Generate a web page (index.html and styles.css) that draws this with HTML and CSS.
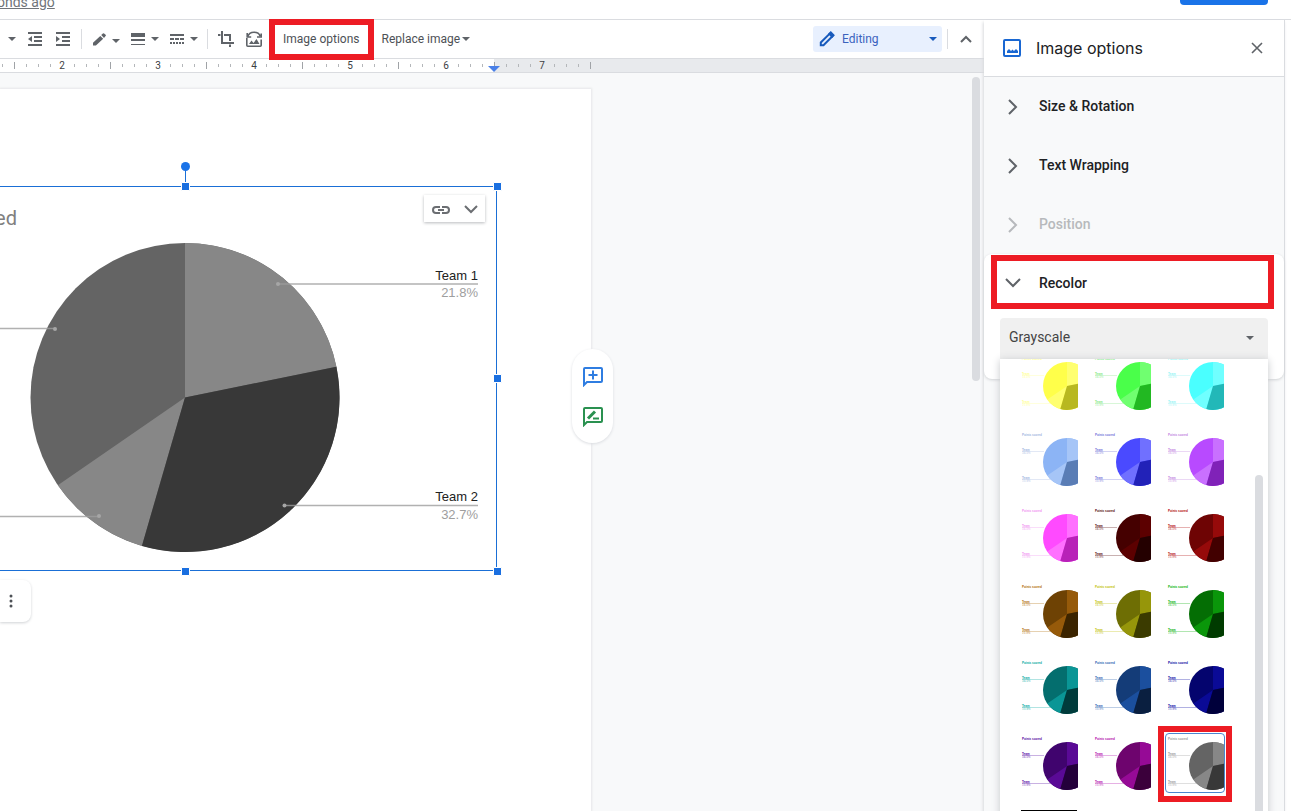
FILE: index.html
```html
<!DOCTYPE html>
<html lang="en">
<head>
<meta charset="utf-8">
<title>Image options</title>
<link rel="stylesheet" href="styles.css">
</head>
<body>
<svg class="defs" aria-hidden="true">
  <symbol id="caret" viewBox="0 0 8 4"><path d="M0 0h8L4 4z" fill="currentColor"/></symbol>
  <symbol id="chev" viewBox="0 0 12 18"><path d="M2 2l7 7-7 7" fill="none" stroke="currentColor" stroke-width="2"/></symbol>
  <symbol id="thumb" viewBox="0 0 58 58">
    <g class="thumb-text">
      <text x="2" y="5.5">Points scored</text>
      <text x="2" y="21">Team</text><text x="2" y="24" opacity=".5">34.5%</text>
      <text x="2" y="49">Team</text><text x="2" y="52" opacity=".5">10.9%</text>
    </g>
    <path class="thumb-line" d="M2 21.5h22M2 49.5h28"/>
    <circle class="thumb-main" cx="47" cy="32" r="24"/>
    <path class="thumb-light" d="M47 32V8A24 24 0 0 1 70.5 27.2zM47 32L40.3 55A24 24 0 0 1 27.3 45.6z"/>
    <path class="thumb-dark" d="M47 32L70.5 27.2A24 24 0 0 1 40.3 55z"/>
  </symbol>
</svg>

<header class="topbar">
  <a class="last-edit" href="#">onds ago</a>
  <button class="share" aria-label="Share"></button>
</header>

<div class="workspace">
  <main class="editor">
    <div class="toolbar">
      <button class="tool t-caret" aria-label="Align options"><svg class="caret"><use href="#caret"/></svg></button>
      <button class="tool t-outdent" aria-label="Decrease indent"><svg width="14" height="14" viewBox="0 0 14 14" fill="#5f6368"><path d="M0 0h14v2H0zM6 4h8v2H6zM6 8h8v2H6zM0 12h14v2H0zM4 4v6L0 7z"/></svg></button>
      <button class="tool t-indent" aria-label="Increase indent"><svg width="14" height="14" viewBox="0 0 14 14" fill="#5f6368"><path d="M0 0h14v2H0zM6 4h8v2H6zM6 8h8v2H6zM0 12h14v2H0zM0 4v6l4-3z"/></svg></button>
      <span class="divider"></span>
      <button class="tool t-pen" aria-label="Border color"><svg width="13" height="13" viewBox="0 0 13 13" fill="#5f6368"><path d="M0 12.500V9.700L7.300 2.900l2.900 2.800L2.900 12.500zM8.200 2.100L9.900.4q.6-.5 1.200 0L12.600 1.800q.6.600 0 1.200L11 4.900z"/></svg><svg class="caret low"><use href="#caret"/></svg></button>
      <button class="tool t-weight" aria-label="Border weight"><svg width="14" height="12" viewBox="0 0 14 12" fill="#5f6368"><path d="M0 0h14v4H0zM0 6h14v2H0zM0 11h14v1H0z"/></svg><svg class="caret"><use href="#caret"/></svg></button>
      <button class="tool t-dash" aria-label="Border dash"><svg width="14" height="12" viewBox="0 0 14 12" fill="#5f6368"><path d="M0 1h14v2H0zM0 5h4v2H0zM5 5h4v2H5zM10 5h4v2h-4zM0 9h2v2H0zM3 9h2v2H3zM6 9h2v2H6zM9 9h2v2H9zM12 9h2v2h-2z"/></svg><svg class="caret"><use href="#caret"/></svg></button>
      <span class="divider"></span>
      <button class="tool t-crop" aria-label="Crop image"><svg width="16" height="16" viewBox="0 0 16 16" fill="none" stroke="#5f6368" stroke-width="2"><path d="M0 4h2.500M4 0v12h12M6 4h6v6M12 13.500V16"/></svg></button>
      <button class="tool t-reset" aria-label="Reset image"><svg width="16" height="16" viewBox="0 0 16 16" fill="none" stroke="#5f6368" stroke-width="1.600"><path d="M.8 7v7.200q0 1 1 1h12.400q1 0 1-1V8.500M1.500 6Q3 1.200 8 1.200T14 5M1.200 2v4h4M15.200 2.500v3.500H11"/><path d="M3 13l2.500-3.500L7.500 12l3-4 3 5z" fill="#5f6368" stroke="none"/></svg></button>
      <button class="tool text-tool marked">Image options</button>
      <button class="tool text-tool">Replace image<svg class="caret"><use href="#caret"/></svg></button>
      <div class="mode-area">
        <button class="mode"><svg width="16" height="16" viewBox="0 0 16 16" fill="none" stroke="#185abc" stroke-width="2"><path d="M1.800 14.200v-2.700l8.700-8.700 2.700 2.700-8.700 8.700z"/><path d="M10.500 2.800l1.300-1.300 2.700 2.700-1.300 1.300z" fill="#185abc"/></svg><span>Editing</span><svg class="caret"><use href="#caret"/></svg></button>
        <span class="divider"></span>
        <button class="tool collapse" aria-label="Hide menus"><svg width="12" height="8" viewBox="0 0 12 8"><path d="M1 7l5-5 5 5" fill="none" stroke="#5f6368" stroke-width="2"/></svg></button>
      </div>
    </div>

    <div class="ruler">
      <svg class="ruler-scale" width="600" height="13">
        <defs><pattern id="ticks" x="-34" y="0" width="96" height="13" patternUnits="userSpaceOnUse">
          <path d="M12 5h1v3h-1zM24 5h1v3h-1zM36 5h1v3h-1zM60 5h1v3h-1zM72 5h1v3h-1zM84 5h1v3h-1z" fill="#b4b7ba"/><path d="M48 3h1v7h-1z" fill="#a0a3a7"/>
        </pattern></defs>
        <rect width="494" height="13" fill="#fff"/>
        <rect width="592" height="13" fill="url(#ticks)"/>
        <g class="ruler-num">
          <text x="62" y="10">2</text><text x="158" y="10">3</text><text x="254" y="10">4</text><text x="350" y="10">5</text><text x="446" y="10">6</text><text x="542" y="10">7</text>
        </g>
        <path d="M488 7h12l-6 6z" fill="#4a80e8"/>
      </svg>
    </div>

    <div class="canvas">
      <article class="page">
        <figure class="chart">
          <svg width="504" height="422" viewBox="0 158 504 422">
            <circle cx="185" cy="397.500" r="154.500" fill="#646464"/>
            <path d="M185 397.500V243A154.500 154.500 0 0 1 336.400 366.700zM185 397.500L141.900 545.900A154.500 154.500 0 0 1 57.800 485.200z" fill="#878787"/>
            <path d="M185 397.500L336.400 366.700A154.500 154.500 0 0 1 141.900 545.900z" fill="#383838"/>
            <path d="M278 284H478M284 505.500H478M0 328.500H55M0 516.500H99" fill="none" stroke="#9e9e9e" stroke-opacity=".8" stroke-width="1.500"/>
            <g fill="#a6a6a6"><circle cx="278" cy="284" r="2"/><circle cx="284.500" cy="505.500" r="2"/><circle cx="55" cy="329" r="2"/><circle cx="99" cy="516" r="2"/></g>
            <text class="chart-title" x="17" y="225">ed</text>
            <g class="chart-label"><text x="478" y="280">Team 1</text><text x="478" y="501">Team 2</text></g>
            <g class="chart-value"><text x="478" y="297">21.8%</text><text x="478" y="519">32.7%</text></g>
            <path d="M0 186.500H496.500V570.500H0M185.500 170V186" fill="none" stroke="#1a6fd6"/>
            <circle cx="185.500" cy="166.500" r="4.500" fill="#1a73e8"/>
            <g fill="#1a6fe0" stroke="#fff"><path d="M181.500 182.500h8v8h-8zM493.500 182.500h8v8h-8zM493.500 374.500h8v8h-8zM493.500 567.500h8v8h-8zM181.500 567.500h8v8h-8z"/></g>
          </svg>
          <button class="link-badge" aria-label="Linked chart options">
            <svg width="18" height="8" viewBox="0 0 18 8" fill="none" stroke="#6b6e72" stroke-width="2"><path d="M8 1H4a3 3 0 0 0 0 6h4M10 1h4a3 3 0 0 1 0 6h-4M6 4h6"/></svg>
            <svg width="14" height="9" viewBox="0 0 14 9" fill="none" stroke="#6b6e72" stroke-width="2"><path d="M1 1l6 6 6-6"/></svg>
          </button>
        </figure>
        <button class="more" aria-label="More options"><svg width="4" height="14" viewBox="0 0 4 14" fill="#4d5156"><circle cx="2" cy="2" r="1.500"/><circle cx="2" cy="7" r="1.500"/><circle cx="2" cy="12" r="1.500"/></svg></button>
      </article>
      <div class="float-actions">
        <button aria-label="Add comment"><svg width="20" height="20" viewBox="0 0 20 20" fill="none" stroke="#2f7de1" stroke-width="2"><path d="M1 18V2q0-1 1-1h16q1 0 1 1v12q0 1-1 1H4zM10 3.500v9M5.500 8h9"/></svg></button>
        <button aria-label="Suggest edits"><svg width="20" height="20" viewBox="0 0 20 20" fill="none" stroke="#2a9150" stroke-width="2"><path d="M1 18V2q0-1 1-1h16q1 0 1 1v12q0 1-1 1H4z"/><path d="M5 11.500L12 4.500" stroke-width="3"/><path d="M10 11.500h6"/></svg></button>
      </div>
      <div class="canvas-scroll"></div>
    </div>
  </main>

  <aside class="sidebar">
    <div class="side-head">
      <svg width="18" height="18" viewBox="0 0 18 18"><rect x="1" y="1" width="16" height="16" rx="1" fill="none" stroke="#1967d2" stroke-width="2"/><path d="M4 14v-2l2-2 2 2 1.500-1.500L11 12l2-2 2 2v2z" fill="#1967d2"/></svg>
      <h1>Image options</h1>
      <button class="close" aria-label="Close"><svg width="12" height="12" viewBox="0 0 12 12"><path d="M1 1l10 10M11 1L1 11" stroke="#5f6368" stroke-width="1.600"/></svg></button>
    </div>
    <button class="section"><svg class="chev"><use href="#chev"/></svg><span>Size &amp; Rotation</span></button>
    <button class="section"><svg class="chev"><use href="#chev"/></svg><span>Text Wrapping</span></button>
    <button class="section" disabled><svg class="chev"><use href="#chev"/></svg><span>Position</span></button>
    <div class="open-card">
      <button class="section recolor"><svg class="chev down" viewBox="0 0 18 12"><path d="M2 2l7 7 7-7" fill="none" stroke="currentColor" stroke-width="2"/></svg>Recolor</button>
      <div class="picker">
        <select aria-label="Recolor"><option>Grayscale</option></select>
        <svg class="caret"><use href="#caret"/></svg>
        <div class="palette">
          <div class="swatches">
            <button class="sw yellow" aria-label="Yellow"><svg><use href="#thumb"/></svg></button>
            <button class="sw green" aria-label="Green"><svg><use href="#thumb"/></svg></button>
            <button class="sw cyan" aria-label="Cyan"><svg><use href="#thumb"/></svg></button>
            <button class="sw cornflower" aria-label="Cornflower"><svg><use href="#thumb"/></svg></button>
            <button class="sw blue" aria-label="Blue"><svg><use href="#thumb"/></svg></button>
            <button class="sw purple" aria-label="Purple"><svg><use href="#thumb"/></svg></button>
            <button class="sw magenta" aria-label="Magenta"><svg><use href="#thumb"/></svg></button>
            <button class="sw d-berry" aria-label="Dark berry"><svg><use href="#thumb"/></svg></button>
            <button class="sw d-red" aria-label="Dark red"><svg><use href="#thumb"/></svg></button>
            <button class="sw d-orange" aria-label="Dark orange"><svg><use href="#thumb"/></svg></button>
            <button class="sw d-yellow" aria-label="Dark yellow"><svg><use href="#thumb"/></svg></button>
            <button class="sw d-green" aria-label="Dark green"><svg><use href="#thumb"/></svg></button>
            <button class="sw d-cyan" aria-label="Dark cyan"><svg><use href="#thumb"/></svg></button>
            <button class="sw d-cornflower" aria-label="Dark cornflower"><svg><use href="#thumb"/></svg></button>
            <button class="sw d-blue" aria-label="Dark blue"><svg><use href="#thumb"/></svg></button>
            <button class="sw d-purple" aria-label="Dark purple"><svg><use href="#thumb"/></svg></button>
            <button class="sw d-magenta" aria-label="Dark magenta"><svg><use href="#thumb"/></svg></button>
            <button class="sw gray selected" aria-label="Grayscale"><svg><use href="#thumb"/></svg></button>
            <button class="sw" aria-label="Negative"><svg viewBox="0 0 58 58"><rect x="1" width="56" height="58" fill="#000"/></svg></button>
          </div>
          <div class="palette-scroll"></div>
        </div>
      </div>
    </div>
  </aside>
</div>
</body>
</html>
```

FILE: styles.css
```css
* { box-sizing: border-box; }
body {
  margin: 0;
  height: 100vh;
  overflow: hidden;
  display: flex;
  flex-direction: column;
  font-family: Roboto, "Liberation Sans", sans-serif;
  font-size: 14px;
  color: #202124;
  background: #fff;
}
button {
  font: inherit;
  color: inherit;
  border: 0;
  background: none;
  padding: 0;
}
svg { display: block; flex: none; }
.defs { display: none; }
.caret { width: 8px; height: 4px; color: #5f6368; }

/* Top strip */
.topbar {
  display: flex;
  justify-content: space-between;
  height: 20px;
  flex: none;
  padding-right: 23px;
  border-bottom: 1px solid #dadce0;
}
.last-edit {
  color: #70757a;
  line-height: 20px;
  margin: -8px 0 0 -3px;
}
.share {
  width: 88px;
  height: 5px;
  border-radius: 0 0 4px 4px;
  background: #1a73e8;
}

.workspace {
  flex: 1;
  min-height: 0;
  display: flex;
  padding-right: 6px;
}
.editor {
  flex: 1;
  min-width: 0;
  display: flex;
  flex-direction: column;
}

/* Toolbar */
.toolbar {
  display: flex;
  align-items: center;
  height: 39px;
  flex: none;
  padding-left: 8px;
  border-bottom: 1px solid #dadce0;
}
.tool { display: flex; align-items: center; flex: none; }
.divider { width: 1px; height: 20px; background: #dadce0; flex: none; }
.t-outdent { margin-left: 12px; }
.t-indent { margin: 0 11px 0 14px; }
.t-pen { margin: 0 11px; gap: 6px; }
.low { margin-top: 4px; }
.t-weight, .t-dash { gap: 6px; }
.t-dash { margin: 0 9px 0 11px; }
.t-crop { margin-left: 10px; }
.t-reset { margin-left: 12px; }
.text-tool { color: #4d5156; font-size: 12px; line-height: 16px; gap: 2px; }
.marked {
  border: 6px solid #ed1c24;
  height: 41px;
  padding: 0 9px 0 8px;
  margin: 0 7px;
  position: relative;
  z-index: 2;
}
.mode-area {
  margin-left: auto;
  display: flex;
  align-items: center;
  padding-right: 12px;
}
.mode {
  display: flex;
  align-items: center;
  width: 129px;
  height: 26px;
  padding: 0 5px 0 6px;
  gap: 7px;
  margin-right: 5px;
  border-radius: 3px;
  background: #e8f0fe;
  color: #3a62bd;
  font-size: 12px;
}
.mode .caret { margin-left: auto; color: #185abc; }
.collapse { margin-left: 12px; }

/* Ruler */
.ruler {
  height: 14px;
  flex: none;
  background: #e8eaed;
  border-bottom: 1px solid #dadce0;
  overflow: hidden;
}
.ruler-num { font-size: 10px; fill: #3c4043; text-anchor: middle; }

/* Document */
.canvas {
  flex: 1;
  min-height: 0;
  position: relative;
  background: #f8f9fa;
  padding-top: 16px;
  display: flex;
}
.page {
  width: 591px;
  background: #fff;
  box-shadow: 0 0 2px 1px #e6e7e9;
}
.chart { margin: 0; padding-top: 69px; position: relative; }
.chart-title { font-size: 20px; fill: #808080; text-anchor: end; }
.chart-label, .chart-value {
  font: 13px "Liberation Sans", sans-serif;
  text-anchor: end;
  fill: #222;
}
.chart-value { fill: #9e9e9e; }
.link-badge {
  position: absolute;
  left: 424px;
  top: 106px;
  width: 61px;
  height: 27px;
  padding: 2px 0 0 1px;
  display: flex;
  align-items: center;
  justify-content: center;
  gap: 14px;
  background: #fff;
  box-shadow: 0 1px 3px #b9bbbe;
}
.more {
  width: 31px;
  height: 42px;
  padding-left: 9px;
  border-radius: 0 8px 8px 0;
  box-shadow: 0 1px 3px #d0d2d5;
}
.float-actions {
  position: absolute;
  left: 572px;
  top: 276px;
  width: 41px;
  padding: 18px 0 16px;
  display: flex;
  flex-direction: column;
  align-items: center;
  gap: 20px;
  border-radius: 21px;
  background: #fff;
  box-shadow: 0 1px 3px #dadce0;
}
.canvas-scroll {
  position: absolute;
  right: 4px;
  top: 4px;
  width: 8px;
  height: 304px;
  border-radius: 4px;
  background: #dadce0;
}

/* Sidebar */
.sidebar {
  width: 301px;
  flex: none;
  display: flex;
  flex-direction: column;
  background: #f8f9fa;
  border-right: 1px solid #dadce0;
  box-shadow: -1px 2px 3px #d9dbde;
  position: relative;
}
.side-head {
  display: flex;
  align-items: center;
  height: 57px;
  flex: none;
  padding: 0 21px 0 19px;
  background: #fff;
  border-bottom: 1px solid #dadce0;
}
.side-head h1 {
  margin: 0 auto 0 15px;
  font: 400 16px/24px Inter, Roboto, sans-serif;
}
.section {
  display: flex;
  align-items: center;
  width: 100%;
  height: 59px;
  flex: none;
  padding-left: 23px;
  font-weight: 500;
  text-align: left;
  color: #202124;
}
.section span { padding-bottom: 2px; }
.section:disabled { color: #b7b9bc; }
.chev { width: 12px; height: 18px; margin-right: 20px; color: #5f6368; }
.section:disabled .chev { color: #b7b9bc; }
.chev.down { width: 18px; height: 12px; margin-right: 17px; }
.open-card {
  background: #fff;
  border-radius: 8px;
  box-shadow: 0 1px 3px #d0d2d5;
  padding: 1px 16px 20px 7px;
}
.recolor {
  width: auto;
  min-width: calc(100% + 6px);
  height: 54px;
  padding: 2px 0 0 7px;
  border: 6px solid #ed1c24;
}
.picker { position: relative; margin: 9px 0 0 9px; }
.picker select {
  appearance: none;
  display: block;
  width: 100%;
  height: 41px;
  padding: 0 9px 3px;
  border: 0;
  border-radius: 4px 4px 0 0;
  background: #f0f0f0;
  color: #444;
  font: 14px Roboto, sans-serif;
}
.picker > .caret { position: absolute; right: 14px; top: 18px; }
.palette {
  position: absolute;
  left: 0;
  right: 0;
  top: 41px;
  height: 460px;
  overflow: hidden;
  background: #fff;
}
.picker::after {
  content: "";
  position: absolute;
  left: 0;
  right: 0;
  top: 41px;
  height: 460px;
  box-shadow: 0 1px 8px #c6c8cb;
  pointer-events: none;
}
.swatches {
  display: grid;
  grid-template-columns: repeat(3, 60px);
  gap: 16px 13px;
  padding-left: 19px;
  margin-top: -6px;
}
.sw {
  --main: #646464; --light: #878787; --dark: #383838; --ink: #999;
  position: relative;
  width: 60px;
  height: 60px;
  border: 1px solid transparent;
}
.sw svg { width: 58px; height: 58px; }
.thumb-text { font: bold 3px "Liberation Sans", sans-serif; fill: var(--ink); }
.thumb-line { stroke: var(--ink); stroke-width: 1; opacity: .3; }
.thumb-main { fill: var(--main); }
.thumb-light { fill: var(--light); }
.thumb-dark { fill: var(--dark); }
.selected { border-color: #4a86cf; border-radius: 4px; }
.selected::after {
  content: "";
  position: absolute;
  inset: -8px -8px -10px;
  border: 6px solid #ed1c24;
}
.yellow { --main: #ffff4a; --light: #ffff70; --dark: #b8b820; --ink: #ffff90; }
.green { --main: #4aff4a; --light: #70ff70; --dark: #22b822; --ink: #80e880; }
.cyan { --main: #4affff; --light: #70ffff; --dark: #22b8b8; --ink: #90f4f4; }
.cornflower { --main: #8cb4f5; --light: #a6c5f7; --dark: #5a7db5; --ink: #a0b4e0; }
.blue { --main: #4a4aff; --light: #7070ff; --dark: #2222b8; --ink: #7070d8; }
.purple { --main: #b84aff; --light: #c970ff; --dark: #8022b8; --ink: #c080e0; }
.magenta { --main: #ff4aff; --light: #ff70ff; --dark: #b822b8; --ink: #f090f0; }
.d-berry { --main: #450000; --light: #5c0000; --dark: #240000; --ink: #500000; }
.d-red { --main: #6e0404; --light: #960a0a; --dark: #420000; --ink: #b00000; }
.d-orange { --main: #6e4204; --light: #965a0a; --dark: #3b2400; --ink: #b06a00; }
.d-yellow { --main: #6e6e04; --light: #96960a; --dark: #3b3b00; --ink: #c0c000; }
.d-green { --main: #046e04; --light: #0a960a; --dark: #003b00; --ink: #00b000; }
.d-cyan { --main: #046e6e; --light: #0a9696; --dark: #003b3b; --ink: #00a8a0; }
.d-cornflower { --main: #143c78; --light: #1b4f9e; --dark: #0a1f40; --ink: #2860b0; }
.d-blue { --main: #04046e; --light: #0a0a96; --dark: #00003b; --ink: #0000a0; }
.d-purple { --main: #40046e; --light: #5a0a96; --dark: #24003b; --ink: #5000a0; }
.d-magenta { --main: #6e046e; --light: #960a96; --dark: #3b003b; --ink: #b000a8; }
.palette-scroll {
  position: absolute;
  right: 5px;
  top: 116px;
  width: 8px;
  height: 400px;
  border-radius: 4px;
  background: #dadce0;
}
```
